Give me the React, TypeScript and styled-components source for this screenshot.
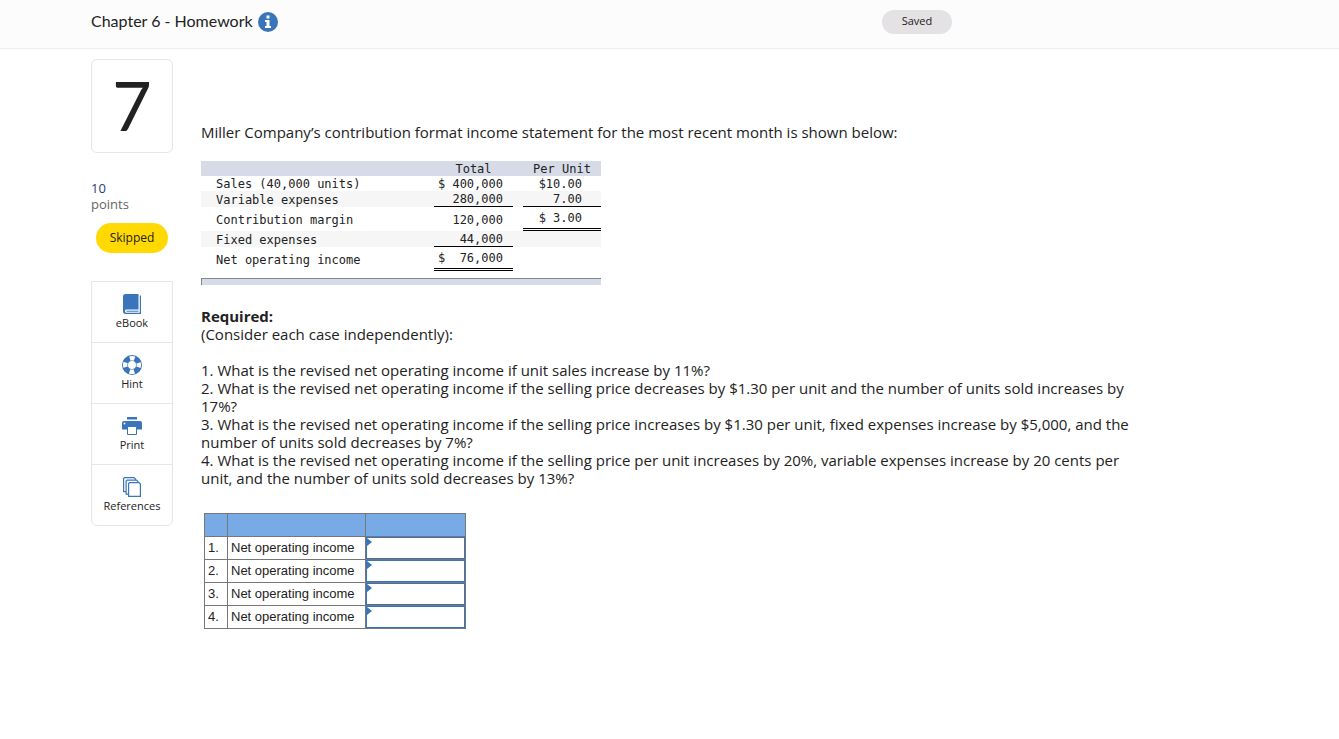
import React from "react";
import styled, { createGlobalStyle } from "styled-components";

const ui = `"Open Sans", "Noto Sans", sans-serif`;
const blue = "#3a75ba";
const line = "#e6e6e6";

const GlobalStyle = createGlobalStyle`
  *, *::before, *::after { box-sizing: border-box; }
  body { margin: 0; background: #fff; color: #222; font-family: ${ui}; font-size: 15px; line-height: 18px; }
  button { font: inherit; color: inherit; border: 0; background: none; padding: 0; margin: 0; cursor: pointer; }
`;

const Header = styled.header`
  display: flex;
  align-items: center;
  gap: 5px;
  height: 49px;
  padding: 0 387px 5px 91px;
  background: #fcfcfc;
  border-bottom: 1px solid #eee;
`;
const Title = styled.h1`
  margin: 0;
  padding-bottom: 2px;
  font-family: Lato, sans-serif;
  font-size: 16px;
  font-weight: 400;
`;
const InfoButton = styled.button`
  display: flex;
`;
const SavedPill = styled.span`
  margin-left: auto;
  width: 70px;
  height: 24px;
  border-radius: 12px;
  background: #e4e2e5;
  font-size: 11px;
  line-height: 22px;
  text-align: center;
`;

const Page = styled.div`
  display: grid;
  grid-template-columns: 82px minmax(0, 1fr);
  gap: 28px;
  padding: 10px 200px 40px 91px;
`;
const Sidebar = styled.aside`
  display: flex;
  flex-direction: column;
`;
const QuestionNumber = styled.div`
  height: 94px;
  border: 1px solid ${line};
  border-radius: 6px;
  font-family: Lato, sans-serif;
  font-size: 68px;
  line-height: 90px;
  text-align: center;
`;
const Points = styled.div`
  margin-top: 27px;
  font-size: 13px;
  line-height: 16px;
  color: #666;
`;
const PointsValue = styled.div`
  font-size: 13px;
  color: #1f3a7a;
`;
const SkippedPill = styled.span`
  align-self: center;
  margin-top: 11px;
  width: 72px;
  border-radius: 15px;
  background: #ffd900;
  font-size: 12px;
  line-height: 30px;
  text-align: center;
`;
const Tools = styled.nav`
  margin-top: 28px;
  border: 1px solid ${line};
  border-radius: 0 0 6px 6px;
`;
const Tool = styled.button`
  display: flex;
  flex-direction: column;
  align-items: center;
  width: 100%;
  height: 61px;
  padding-top: 12px;
  font-size: 11px;
  line-height: 18px;
  & + & { border-top: 1px solid ${line}; }
  &:first-child { height: 60px; }
`;

const Question = styled.main`
  padding-top: 64px;
`;
const Paragraph = styled.p`
  margin: 0;
`;
const Required = styled.section`
  margin-top: 22px;
`;
const RequiredTitle = styled.h2`
  margin: 0;
  font: inherit;
  font-weight: 700;
`;
const Cases = styled.div`
  margin-top: 18px;
`;

const Statement = styled.table`
  width: 400px;
  margin-top: 20px;
  border-spacing: 0;
  table-layout: fixed;
  font-family: "DejaVu Sans Mono", monospace;
  font-size: 12px;
  line-height: 13px;
  white-space: pre;
`;
const StatementHead = styled.th`
  height: 15px;
  padding: 2px 0 0;
  background: #d7dbe7;
  font-weight: 400;
`;
const StatementRow = styled.tr<{ $shaded?: boolean }>`
  background: ${(p) => (p.$shaded ? "#f6f6f6" : "none")};
`;
const StatementLabel = styled.th<{ $h: number }>`
  height: ${(p) => p.$h}px;
  padding: 2px 0 0 15px;
  font-weight: 400;
  text-align: left;
`;
const Amount = styled.td<{ $rule?: "single" | "double"; $inset: number }>`
  padding: 2px ${(p) => p.$inset}px 0 0;
  text-align: right;
  border-bottom: ${(p) =>
    p.$rule === "single" ? "1px solid #000" : p.$rule === "double" ? "3px double #000" : "0"};
`;
const StatementFoot = styled.div`
  width: 400px;
  height: 7px;
  margin-top: 7px;
  background: #d7dbe7;
  border: solid #82868e;
  border-width: 1px 0 0 1px;
`;

const Answers = styled.table`
  width: 262px;
  margin: 26px 0 0 3px;
  border-collapse: collapse;
  table-layout: fixed;
  font-family: "Liberation Sans", Arial, sans-serif;
  font-size: 13px;
  line-height: 15px;
`;
const AnswerHead = styled.th`
  height: 23px;
  padding: 0;
  background: #78abe6;
  border: 1px solid #777;
`;
const AnswerCell = styled.td<{ $flush?: boolean }>`
  position: relative;
  height: 23px;
  padding: ${(p) => (p.$flush ? "0" : "0 3px 2px")};
  border: 1px solid #777;
`;
const AnswerInput = styled.input`
  display: block;
  width: 100%;
  height: 22px;
  padding: 0 6px;
  border: 1px solid ${blue};
  outline: 0;
  background: #fff;
  font: inherit;
  text-align: right;
`;
const Marker = styled.span`
  position: absolute;
  top: 1px;
  left: 1px;
  border: solid transparent;
  border-width: 4px 0 4px 5px;
  border-left-color: ${blue};
`;

const InfoIcon = () => (
  <svg width="20" height="20" viewBox="0 0 20 20" aria-hidden="true">
    <circle cx="10" cy="10" r="10" fill={blue} />
    <path fill="#fff" d="M8.5 3.5h3v3h-3zM7 8h4.5v6H13v2H7v-2h1.5v-4H7z" />
  </svg>
);
const BookIcon = () => (
  <svg width="20" height="20" viewBox="0 0 20 20" aria-hidden="true">
    <path fill={blue} d="M3.5 0H16.500V15.500H4Q3 15.500 3 17T4 18.700H17.800V1.500H19V20H3.500Q1 20 1 17V2.500Q1 0 3.500 0z" />
    <path fill={blue} d="M4.500 16.700h12v1h-12z" />
  </svg>
);
const HintIcon = () => (
  <svg width="20" height="20" viewBox="0 0 20 20" fill="none" aria-hidden="true">
    <circle cx="10" cy="10" r="7" stroke={blue} strokeWidth="6" />
    <circle cx="10" cy="10" r="6.800" stroke="#fff" strokeWidth="4.400" strokeDasharray="4.700 5.981" strokeDashoffset="2.350" />
  </svg>
);
const PrintIcon = () => (
  <svg width="20" height="20" viewBox="0 0 20 20" aria-hidden="true">
    <path fill={blue} d="M5 1h10v2.500H5zM2 5h16q2 0 2 2v6.500H0V7q0-2 2-2z" />
    <path fill="#fff" stroke={blue} d="M5.500 10.500h9v8h-9z" />
    <circle cx="2.500" cy="7.500" r="1" fill="#fff" />
  </svg>
);
const ReferencesIcon = () => (
  <svg width="20" height="20" viewBox="0 0 20 20" fill="#fff" stroke={blue} strokeWidth="1.200" aria-hidden="true">
    <path d="M2.500.600H12l1.500 1.500v12.500H1.600V1.500z" />
    <path d="M5 3.100h9.500l1.500 1.500v12.500H4.100V4z" />
    <path d="M7.500 5.600h9.500l1.400 1.400v12.400H6.600V6.500z" />
  </svg>
);

const tools = [
  { label: "eBook", Icon: BookIcon },
  { label: "Hint", Icon: HintIcon },
  { label: "Print", Icon: PrintIcon },
  { label: "References", Icon: ReferencesIcon },
];

type Rule = "single" | "double" | undefined;
const rows: { label: string; total: string; unit: string; h: number; shaded?: boolean; totalRule?: Rule; unitRule?: Rule }[] = [
  { label: "Sales (40,000 units)", total: "$ 400,000", unit: "$10.00", h: 15 },
  { label: "Variable expenses", total: "280,000", unit: "7.00", h: 16, shaded: true, totalRule: "single", unitRule: "single" },
  { label: "Contribution margin", total: "120,000", unit: "$ 3.00", h: 24, unitRule: "double" },
  { label: "Fixed expenses", total: "44,000", unit: "", h: 16, shaded: true, totalRule: "single" },
  { label: "Net operating income", total: "$  76,000", unit: "", h: 24, totalRule: "double" },
];

const cases = [
  "1. What is the revised net operating income if unit sales increase by 11%?",
  "2. What is the revised net operating income if the selling price decreases by $1.30 per unit and the number of units sold increases by 17%?",
  "3. What is the revised net operating income if the selling price increases by $1.30 per unit, fixed expenses increase by $5,000, and the number of units sold decreases by 7%?",
  "4. What is the revised net operating income if the selling price per unit increases by 20%, variable expenses increase by 20 cents per unit, and the number of units sold decreases by 13%?",
];

export default function App() {
  return (
    <>
      <GlobalStyle />
      <Header>
        <Title>Chapter 6 - Homework</Title>
        <InfoButton aria-label="Assignment information">
          <InfoIcon />
        </InfoButton>
        <SavedPill>Saved</SavedPill>
      </Header>
      <Page>
        <Sidebar>
          <QuestionNumber>7</QuestionNumber>
          <Points>
            <PointsValue>10</PointsValue>
            points
          </Points>
          <SkippedPill>Skipped</SkippedPill>
          <Tools>
            {tools.map(({ label, Icon }) => (
              <Tool key={label}>
                <Icon />
                {label}
              </Tool>
            ))}
          </Tools>
        </Sidebar>
        <Question>
          <Paragraph>
            Miller Company’s contribution format income statement for the most recent month is shown below:
          </Paragraph>
          <Statement>
            <colgroup>
              <col />
              <col width="79" />
              <col width="10" />
              <col width="78" />
            </colgroup>
            <thead>
              <tr>
                <StatementHead />
                <StatementHead scope="col">Total</StatementHead>
                <StatementHead />
                <StatementHead scope="col">Per Unit</StatementHead>
              </tr>
            </thead>
            <tbody>
              {rows.map((r) => (
                <StatementRow key={r.label} $shaded={r.shaded}>
                  <StatementLabel scope="row" $h={r.h}>{r.label}</StatementLabel>
                  <Amount $inset={10} $rule={r.totalRule}>{r.total}</Amount>
                  <td />
                  <Amount $inset={19} $rule={r.unitRule}>{r.unit}</Amount>
                </StatementRow>
              ))}
            </tbody>
          </Statement>
          <StatementFoot />
          <Required>
            <RequiredTitle>Required:</RequiredTitle>
            <Paragraph>(Consider each case independently):</Paragraph>
            <Cases>
              {cases.map((c) => (
                <Paragraph key={c}>{c}</Paragraph>
              ))}
            </Cases>
          </Required>
          <Answers>
            <colgroup>
              <col width="23" />
              <col width="138" />
              <col width="100" />
            </colgroup>
            <thead>
              <tr>
                <AnswerHead />
                <AnswerHead />
                <AnswerHead />
              </tr>
            </thead>
            <tbody>
              {[1, 2, 3, 4].map((n) => (
                <tr key={n}>
                  <AnswerCell>{n}.</AnswerCell>
                  <AnswerCell>
                    <label htmlFor={`answer-${n}`}>Net operating income</label>
                  </AnswerCell>
                  <AnswerCell $flush>
                    <AnswerInput id={`answer-${n}`} type="text" />
                    <Marker />
                  </AnswerCell>
                </tr>
              ))}
            </tbody>
          </Answers>
        </Question>
      </Page>
    </>
  );
}
